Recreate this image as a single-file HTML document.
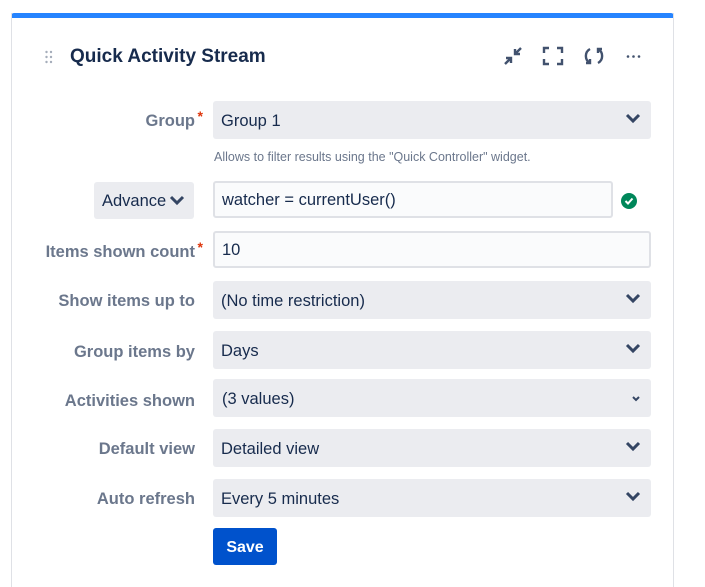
<!DOCTYPE html><html><head><style>
html,body{margin:0;width:705px;height:587px;overflow:hidden}
body{background:#fff;font-family:"Liberation Sans",sans-serif;position:relative}
.card{position:absolute;left:11px;top:13px;width:663px;height:580px;border-left:1px solid #dfe1e6;border-right:1px solid #dfe1e6;box-sizing:border-box}
.bar{position:absolute;left:11px;top:13px;width:663px;height:5px;background:#2684ff;border-radius:3px 3px 0 0}
.title{position:absolute;left:70px;top:46px;font-size:19px;font-weight:bold;color:#172b4d}
.lab{position:absolute;right:510px;font-size:16.5px;font-weight:bold;color:#6b778c;text-align:right;white-space:nowrap}
.lab i{color:#de350b;font-style:normal;position:absolute;right:-8px;top:-4px;font-size:14px}
.sel{position:absolute;left:213px;width:438px;height:38px;background:#ebecf0;border-radius:3px;font-size:16.5px;color:#172b4d;line-height:40px;padding-left:8px;box-sizing:border-box}
.inp{position:absolute;left:213px;height:37px;background:#fafbfc;border:2px solid #dfe1e6;border-radius:3px;font-size:16.5px;color:#172b4d;line-height:35px;padding-left:7px;box-sizing:border-box}
.chev{position:absolute;right:10px;top:12px}
</style></head><body>
<div class="bar"></div><div class="card"></div>
<svg style="position:absolute;left:45px;top:50px" width="8" height="14"><g fill="#a5adba"><circle cx="1.5" cy="2" r="1.2"/><circle cx="6" cy="2" r="1.2"/><circle cx="1.5" cy="7" r="1.2"/><circle cx="6" cy="7" r="1.2"/><circle cx="1.5" cy="12" r="1.2"/><circle cx="6" cy="12" r="1.2"/></g></svg>
<div class="title">Quick Activity Stream</div>
<svg style="position:absolute;left:502px;top:45px" width="140" height="22" fill="none" stroke="#42526e" stroke-width="2.4">
<path d="M3 19 L9 13 M4 13 H9 V18 M19 3 L13 9 M13 4 V9 H18"/>
<path d="M42 8 V3 H47 M55 3 H60 V8 M60 14 V19 H55 M47 19 H42 V14"/>
<path d="M88 4 A8 8 0 0 0 88 18 M84 18 H88 V14 M96 18 A8 8 0 0 0 96 4 M100 4 H96 V8"/>
<circle cx="126" cy="11.5" r="1.3" fill="#42526e" stroke="none"/><circle cx="131.5" cy="11.5" r="1.3" fill="#42526e" stroke="none"/><circle cx="137" cy="11.5" r="1.3" fill="#42526e" stroke="none"/>
</svg>
<div class="lab" style="top:112px">Group<i>*</i></div>
<div class="sel" style="top:101px">Group 1<svg class="chev" width="16" height="12"><path d="M2 2 L8 8 L14 2" stroke="#344563" stroke-width="3" fill="none"/></svg></div>
<div style="position:absolute;left:214px;top:150px;font-size:12.5px;color:#6b778c">Allows to filter results using the "Quick Controller" widget.</div>
<div style="position:absolute;left:94px;top:182px;width:100px;height:37px;background:#ebecf0;border-radius:3px;font-size:16.5px;color:#172b4d;line-height:39px;padding-left:8px;box-sizing:border-box;overflow:hidden;white-space:nowrap">Advance<svg style="position:absolute;right:8px;top:13px;background:#ebecf0" width="18" height="12"><path d="M3 2 L9 8 L15 2" stroke="#344563" stroke-width="3" fill="none"/></svg></div>
<div class="inp" style="top:181px;width:400px">watcher = currentUser()</div>
<svg style="position:absolute;left:620px;top:192px" width="18" height="18"><circle cx="9" cy="9" r="8" fill="#00875a"/><path d="M5.5 9 L8 11.5 L12.5 6.5" stroke="#fff" stroke-width="2" fill="none"/></svg>
<div class="lab" style="top:243px">Items shown count<i>*</i></div>
<div class="inp" style="top:231px;width:438px">10</div>
<div class="lab" style="top:292px">Show items up to</div>
<div class="sel" style="top:281px">(No time restriction)<svg class="chev" width="16" height="12"><path d="M2 2 L8 8 L14 2" stroke="#344563" stroke-width="3" fill="none"/></svg></div>
<div class="lab" style="top:343px">Group items by</div>
<div class="sel" style="top:331px">Days<svg class="chev" width="16" height="12"><path d="M2 2 L8 8 L14 2" stroke="#344563" stroke-width="3" fill="none"/></svg></div>
<div class="lab" style="top:392px">Activities shown</div>
<div class="sel" style="top:379px;padding-left:9px">(3 values)<svg style="position:absolute;right:10px;top:16px" width="10" height="8"><path d="M2 2 L5 5 L8 2" stroke="#344563" stroke-width="2" fill="none"/></svg></div>
<div class="lab" style="top:440px">Default view</div>
<div class="sel" style="top:429px">Detailed view<svg class="chev" width="16" height="12"><path d="M2 2 L8 8 L14 2" stroke="#344563" stroke-width="3" fill="none"/></svg></div>
<div class="lab" style="top:490px">Auto refresh</div>
<div class="sel" style="top:479px">Every 5 minutes<svg class="chev" width="16" height="12"><path d="M2 2 L8 8 L14 2" stroke="#344563" stroke-width="3" fill="none"/></svg></div>
<div style="position:absolute;left:213px;top:528px;width:64px;height:37px;background:#0052cc;border-radius:3px;color:#fff;font-weight:bold;font-size:16px;line-height:39px;text-align:center">Save</div>
</body></html>
